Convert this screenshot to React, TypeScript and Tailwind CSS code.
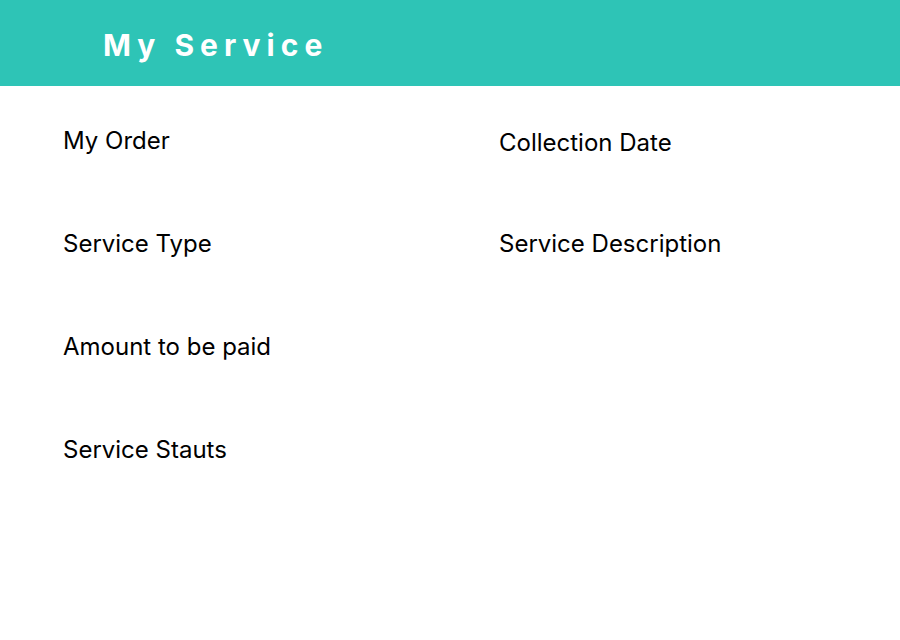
const left = ["My Order", "Service Type", "Amount to be paid", "Service Stauts"];
const right = ["Collection Date", "Service Description"];

export default function App() {
  return (
    <div className="min-h-screen bg-white font-['Inter',sans-serif] text-black">
      <header className="bg-[#2ec4b6] px-[103px] pt-[25px] pb-[21px]">
        <h1 className="text-3xl leading-10 font-bold tracking-[6px] text-white">My Service</h1>
      </header>
      <main className="grid grid-cols-2 gap-x-[35px] pt-[39px] pl-[63px] text-2xl">
        <ul className="flex flex-col gap-[71px]">
          {left.map((label) => (
            <li key={label}>{label}</li>
          ))}
        </ul>
        <ul className="flex flex-col gap-[69px] pt-0.5">
          {right.map((label) => (
            <li key={label}>{label}</li>
          ))}
        </ul>
      </main>
    </div>
  );
}
